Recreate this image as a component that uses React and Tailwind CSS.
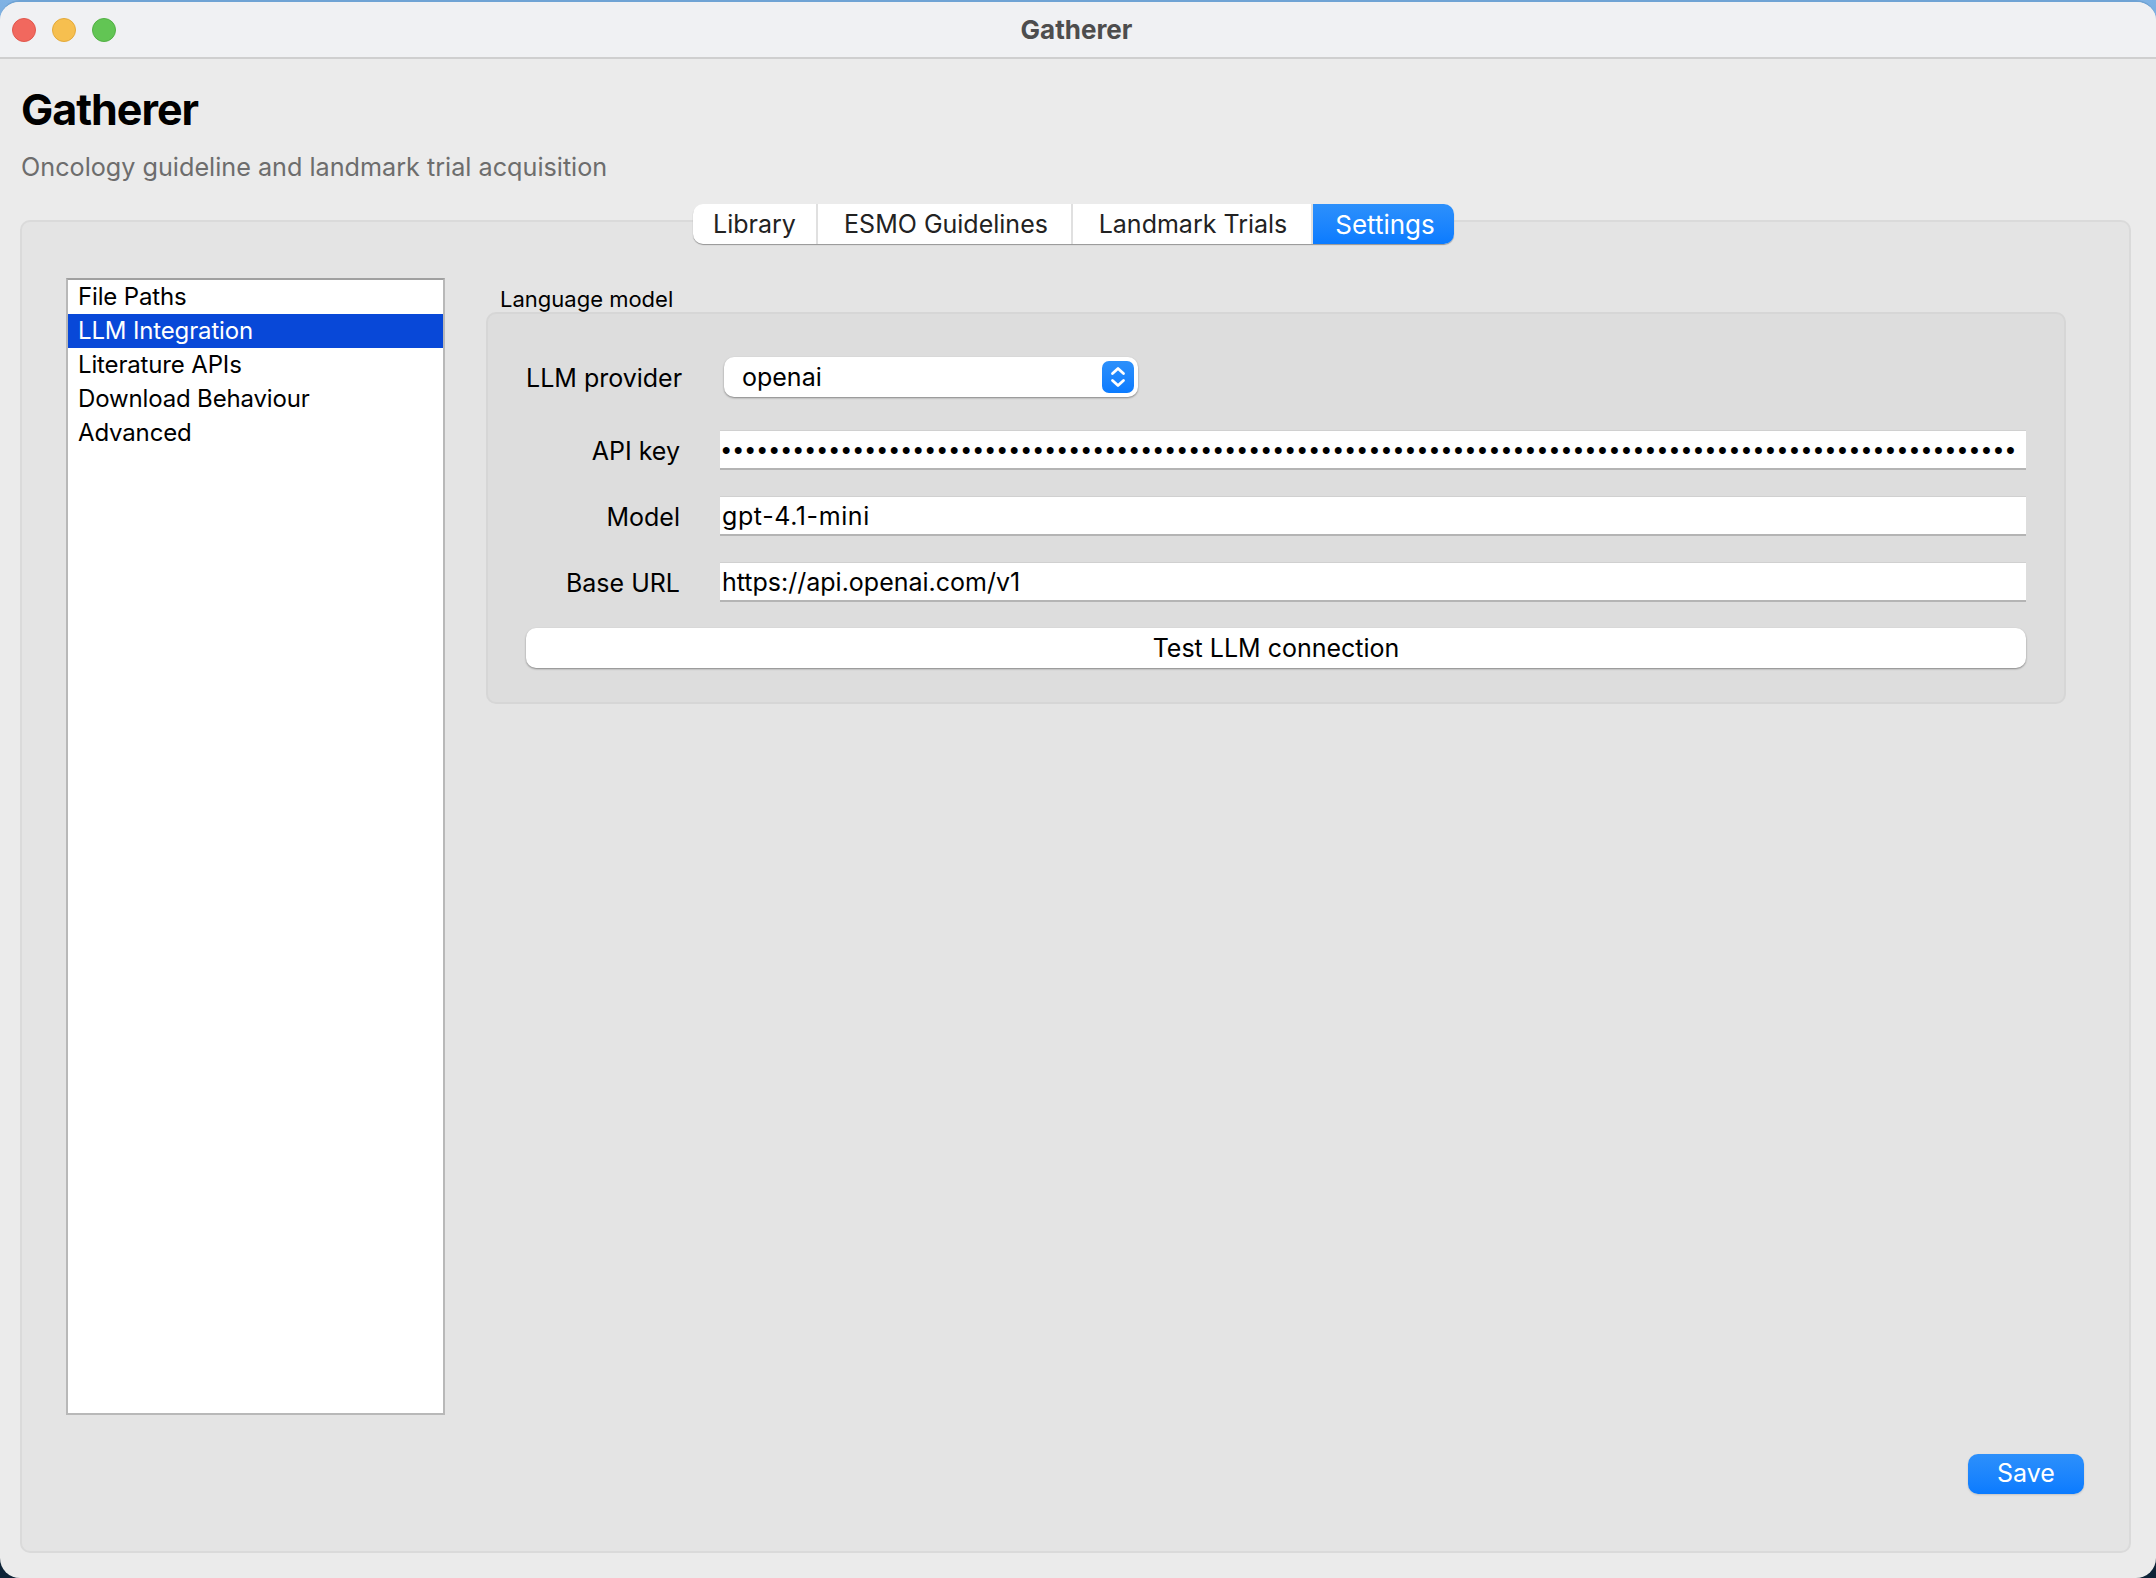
import React from "react";

const items = ["File Paths", "LLM Integration", "Literature APIs", "Download Behaviour", "Advanced"];
const tabs = [
  { label: "Library", w: "w-[125px]" },
  { label: "ESMO Guidelines", w: "w-[255px] pl-[3px]" },
  { label: "Landmark Trials", w: "w-[240px] pl-[2px]" },
];

const Row = ({ label, children, className = "" }) => (
  <div className={`flex items-center h-[40px] ${className}`}>
    <div className="w-[194px] pr-[40px] pt-[3px] text-right text-[25px] text-black whitespace-nowrap">{label}</div>
    {children}
  </div>
);

const Field = ({ children, className = "" }) => (
  <div className={`w-[1306px] h-[40px] bg-white border-t border-[#d0d0d0] border-b-2 border-b-[#b4b4b4] pl-[2px] pt-[3px] flex items-center text-[25px] text-black whitespace-nowrap overflow-hidden ${className}`}>
    {children}
  </div>
);

const App = () => {
  return (
    <div className="w-[2156px] h-[1578px] bg-gradient-to-b from-[#7fb2e4] via-[#1c3a5a] to-[#0d2236] font-['Inter',sans-serif] overflow-hidden">
      <div className="w-full h-full rounded-[20px] bg-[#ebebeb] border-t-2 border-[#6fa3d4] flex flex-col overflow-hidden">
        {/* title bar */}
        <div className="h-[57px] shrink-0 bg-[#f0f1f3] border-b-2 border-[#cfcfcf] relative flex items-center justify-center pr-[3px]">
          <div className="absolute left-[12px] top-[16px] flex gap-[16px]">
            <div className="w-[24px] h-[24px] rounded-full bg-[#f1685e] border border-[#e0574c]" />
            <div className="w-[24px] h-[24px] rounded-full bg-[#f6bf4f] border border-[#e3a93a]" />
            <div className="w-[24px] h-[24px] rounded-full bg-[#62c554] border border-[#52b044]" />
          </div>
          <span className="text-[26px] font-bold text-[#4d4d4d]">Gatherer</span>
        </div>

        {/* header */}
        <div className="pl-[21px] shrink-0">
          <h1 className="mt-[27px] text-[43px] leading-[46px] font-bold text-black tracking-[-1px]">Gatherer</h1>
          <p className="mt-[19px] text-[25.2px] leading-[32px] text-[#6d6d6d]">
            Oncology guideline and landmark trial acquisition
          </p>
        </div>

        {/* tab panel */}
        <div className="mt-[37px] ml-[20px] mr-[25px] mb-[25px] flex-1 bg-[#e4e4e4] border-2 border-[#dadada] rounded-[10px] flex flex-col">
          <div className="flex justify-center -mt-[18px] pr-[4px]">
            <div className="flex h-[40px] rounded-[10px] bg-white shadow-[0_1px_1px_rgba(0,0,0,0.35)] overflow-hidden text-[25px]">
              {tabs.map((t) => (
                <div key={t.label} className={`${t.w} pt-[2px] flex items-center justify-center border-r-2 border-[#e0e0e0] text-[#222]`}>
                  {t.label}
                </div>
              ))}
              <div className="w-[141px] pl-[3px] flex items-center justify-center bg-gradient-to-b from-[#2c90fb] to-[#0a7bff] text-white text-[26px]">
                Settings
              </div>
            </div>
          </div>

          <div className="flex-1 flex flex-col pl-[44px] pr-[14px]">
            <div className="flex mt-[34px] gap-[41px]">
              {/* side list */}
              <div className="w-[379px] h-[1137px] shrink-0 bg-white border-2 border-[#b8b8b8] border-t-[#a0a0a0] text-[24px] tracking-[-0.15px] text-black">
                {items.map((item) => (
                  <div
                    key={item}
                    className={`h-[34px] pl-[10px] flex items-center ${item === "LLM Integration" ? "bg-[#0848d8] text-white" : ""}`}
                  >
                    {item}
                  </div>
                ))}
              </div>

              {/* form */}
              <div className="w-[1580px]">
                <div className="pl-[14px] h-[34px] text-[22px] leading-[42px] text-black">Language model</div>
                <div className="h-[392px] bg-[#dddddd] border-2 border-[#d6d6d6] rounded-[10px] pt-[43px] pl-[38px]">
                  <Row label="LLM provider">
                    <div className="ml-[4px] w-[414px] h-[40px] bg-white rounded-[10px] shadow-[0_1px_2px_rgba(0,0,0,0.4)] flex items-center justify-between pl-[18px] pr-[4px] text-[25px] text-black">
                      <span className="mt-[2px]">openai</span>
                      <div className="w-[32px] h-[32px] rounded-[7px] bg-gradient-to-b from-[#2c90fb] to-[#0a7bff] flex items-center justify-center">
                        <svg width="16" height="24" viewBox="0 0 16 24" fill="none" stroke="white" strokeWidth="2.8" strokeLinecap="round" strokeLinejoin="round">
                          <path d="M2.5 8.5 8 3.5l5.5 5" />
                          <path d="M2.5 15.5 8 20.5l5.5-5" />
                        </svg>
                      </div>
                    </div>
                  </Row>
                  <Row label="API key" className="mt-[33px]">
                    <Field>
                      <span className="-mt-[3px] font-['Liberation_Sans',sans-serif] font-bold text-[24px] tracking-[3.6px]">{"•".repeat(108)}</span>
                    </Field>
                  </Row>
                  <Row label="Model" className="mt-[26px]">
                    <Field className="tracking-[0.6px]">gpt-4.1-mini</Field>
                  </Row>
                  <Row label="Base URL" className="mt-[26px]">
                    <Field>https://api.openai.com/v1</Field>
                  </Row>
                  <div className="mt-[26px] w-[1500px] h-[40px] pt-[2px] bg-white rounded-[10px] shadow-[0_1px_2px_rgba(0,0,0,0.4)] flex items-center justify-center text-[25px] text-black">
                    Test LLM connection
                  </div>
                </div>
              </div>
            </div>

            <div className="flex justify-end mt-[39px] pr-[31px]">
              <div className="w-[116px] h-[40px] rounded-[10px] bg-gradient-to-b from-[#2c90fb] to-[#0a7bff] shadow-[0_1px_2px_rgba(0,0,0,0.15)] flex items-center justify-center text-[25px] text-white">
                Save
              </div>
            </div>
          </div>
        </div>
      </div>
    </div>
  );
};

export default App;
